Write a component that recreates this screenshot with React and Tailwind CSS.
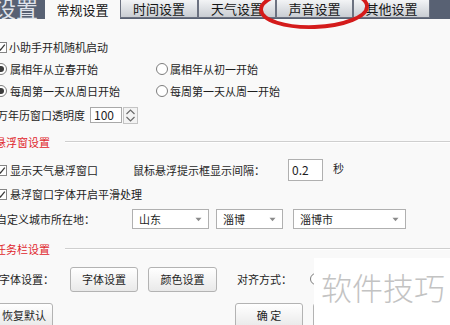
import React from "react";

const Check = () => (
  <span className="w-[11px] h-[11px] border border-[#858585] bg-white flex items-center justify-center shrink-0">
    <svg width="9" height="9" viewBox="0 0 9 9">
      <path d="M1.3 4.6 L3.4 7 L7.8 1.6" stroke="#3a3a3a" strokeWidth="1.3" fill="none" />
    </svg>
  </span>
);

const Radio = ({ on }) => (
  <span className="w-[12px] h-[12px] rounded-full border border-[#7d7d7d] bg-white flex items-center justify-center shrink-0">
    {on && <span className="w-[6px] h-[6px] rounded-full bg-[#3c3c3c]" />}
  </span>
);

const Arrow = () => (
  <svg width="7" height="5" viewBox="0 0 7 5" className="shrink-0">
    <path d="M0.5 0.8 L3.5 4.2 L6.5 0.8 Z" fill="#8a8a8a" />
  </svg>
);

const Select = ({ w, children }) => (
  <div className={`h-[20px] border border-[#b0b0b0] bg-white flex items-center justify-between pl-[6px] pr-[6px] ${w}`}>
    <span>{children}</span>
    <Arrow />
  </div>
);

const Btn = ({ w, children, extra }) => (
  <div
    className={`h-[25px] border border-[#b3b3b3] rounded-[3px] bg-gradient-to-b from-[#ffffff] to-[#e9e9e9] flex items-center justify-center shrink-0 ${w} ${extra || ""}`}
  >
    {children}
  </div>
);

const Section = ({ title, extra }) => (
  <div className={`h-[20px] flex items-center ${extra}`}>
    <span className="ml-[-5px] text-[#e0262c]">{title}</span>
    <div className="flex-1 ml-[15px] border-t border-[#cfcfcf] border-b border-b-white h-[2px]" />
  </div>
);

const Tab = ({ children, w }) => (
  <div
    className={`h-[18px] ${w} border border-[#6b7180] border-t-0 bg-gradient-to-b from-[#f3f4f6] to-[#c9cdd3] flex items-center justify-center text-[13px] text-[#151515] leading-none`}
  >
    {children}
  </div>
);

export default function App() {
  return (
    <div className="w-[450px] h-[325px] overflow-hidden relative bg-[#f9f9f9] text-[11px] text-[#1e1e1e] font-['Noto_Sans_CJK_SC','Noto_Sans',sans-serif] leading-none">
      {/* tab bar */}
      <div className="h-[19px] bg-[#586173] flex items-start">
        <div className="w-[45px] h-[19px] overflow-hidden relative">
          <span className="absolute left-[-6px] top-[-4px] text-[22px] text-[#dfe3ea] leading-none">设置</span>
        </div>
        <div className="w-[75px] h-[19px] bg-[#f9f9f9] flex items-center justify-center text-[13px] text-[#151515]">
          常规设置
        </div>
        <Tab w="w-[78px]">时间设置</Tab>
        <Tab w="w-[78px]">天气设置</Tab>
        <Tab w="w-[77px]">声音设置</Tab>
        <Tab w="w-[77px]">其他设置</Tab>
      </div>

      {/* red annotation ellipse */}
      <svg className="absolute left-[255px] top-[-14px]" width="122" height="46" viewBox="0 0 122 46">
        <ellipse cx="59" cy="22" rx="53" ry="19" fill="none" stroke="#d41b1b" strokeWidth="3.8" transform="rotate(-2 59 22)" />
      </svg>

      {/* body */}
      <div className="flex flex-col">
        <div className="mt-[17px] h-[22px] flex items-center">
          <span className="ml-[-4px]"><Check /></span>
          <span className="ml-[2px]">小助手开机随机启动</span>
        </div>
        <div className="h-[22px] flex items-center">
          <div className="w-[161px] ml-[-5px] flex items-center shrink-0">
            <Radio on />
            <span className="ml-[3px]">属相年从立春开始</span>
          </div>
          <Radio />
          <span className="ml-[2px]">属相年从初一开始</span>
        </div>
        <div className="h-[22px] flex items-center">
          <div className="w-[161px] ml-[-5px] flex items-center shrink-0">
            <Radio on />
            <span className="ml-[3px]">每周第一天从周日开始</span>
          </div>
          <Radio />
          <span className="ml-[2px]">每周第一天从周一开始</span>
        </div>
        <div className="mt-[2px] h-[22px] flex items-center">
          <span className="ml-[-3px]">万年历窗口透明度</span>
          <div className="ml-[5px] w-[32px] h-[16px] border border-[#a9a9a9] bg-white flex items-center pl-[3px] text-[12px]">100</div>
          <svg className="ml-[1px]" width="15" height="17" viewBox="0 0 15 17">
            <rect x="0.5" y="0.5" width="14" height="16" fill="#f3f3f3" stroke="#c4c4c4" />
            <path d="M3.5 7 L7.5 3 L11.5 7" stroke="#6a6a6a" strokeWidth="1.2" fill="none" />
            <path d="M3.5 10 L7.5 14 L11.5 10" stroke="#6a6a6a" strokeWidth="1.2" fill="none" />
          </svg>
        </div>

        <Section title="悬浮窗设置" extra="mt-[6px]" />

        <div className="mt-[7px] h-[22px] flex items-center">
          <div className="w-[137px] ml-[-4px] flex items-center shrink-0">
            <Check />
            <span className="ml-[3px]">显示天气悬浮窗口</span>
          </div>
          <span className="w-[155px] shrink-0">鼠标悬浮提示框显示间隔：</span>
          <div className="w-[35px] h-[22px] border border-[#b0b0b0] bg-white flex items-center pl-[3px] text-[12px] shrink-0">0.2</div>
          <span className="ml-[10px] mt-[-4px]">秒</span>
        </div>
        <div className="mt-[2px] h-[22px] flex items-center">
          <span className="ml-[-4px]"><Check /></span>
          <span className="ml-[3px]">悬浮窗口字体开启平滑处理</span>
        </div>
        <div className="mt-[3px] h-[22px] flex items-center">
          <span className="ml-[-4px] w-[136px] shrink-0">自定义城市所在地：</span>
          <Select w="w-[77px]">山东</Select>
          <div className="ml-[7px]">
            <Select w="w-[67px]">淄博</Select>
          </div>
          <div className="ml-[10px]">
            <Select w="w-[113px]">淄博市</Select>
          </div>
        </div>

        <Section title="任务栏设置" extra="mt-[9px]" />

        <div className="mt-[7px] h-[26px] flex items-center">
          <span className="ml-[-1px] w-[71px] shrink-0">字体设置：</span>
          <Btn w="w-[68px]">字体设置</Btn>
          <Btn w="w-[69px]" extra="ml-[10px]">颜色设置</Btn>
          <span className="ml-[20px] w-[73px] shrink-0">对齐方式：</span>
          <Radio />
        </div>
        <div className="mt-[11px] h-[25px] flex items-start">
          <Btn w="w-[68px]" extra="ml-[-15px]">
            <span className="ml-[10px]">恢复默认</span>
          </Btn>
          <Btn w="w-[68px]" extra="ml-[182px]">确 定</Btn>
          <Btn w="w-[68px]" extra="ml-[10px]" />
        </div>
      </div>

      {/* watermark */}
      <div className="absolute left-[314px] top-[258px] right-0 bottom-0 bg-white">
        <div className="ml-[7px] mt-[13px] text-[31px] font-light leading-none text-[#c3c3c3]">软件技巧</div>
      </div>
    </div>
  );
}
